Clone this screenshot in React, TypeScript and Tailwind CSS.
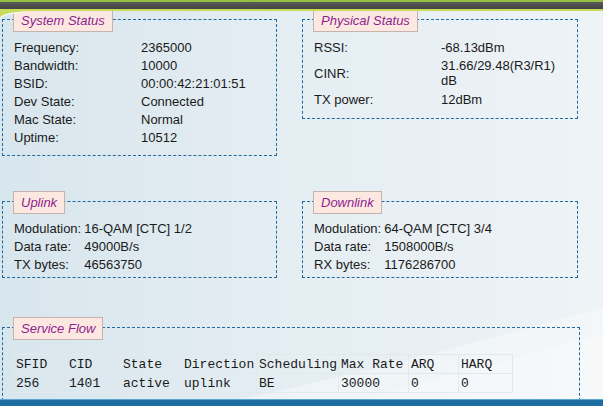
import React from "react";

type Row = [string, React.ReactNode, number?];

const sans = { fontFamily: '"Liberation Sans", Arial, sans-serif' };

function Legend({ title }: { title: string }) {
  return (
    <div className="relative z-10 ml-[11px] self-start h-[23px] px-[7px] flex items-center border border-[#c7b3ad] bg-[#fde8e1] text-[13px] italic text-[#8d1f8f] leading-none">
      {title}
    </div>
  );
}

function Panel({
  title,
  className,
  children,
}: {
  title: string;
  className?: string;
  children: React.ReactNode;
}) {
  return (
    <div className="flex flex-col">
      <Legend title={title} />
      <div className={"-mt-[13px] border border-dashed border-[#1f6aa3] " + (className ?? "")}>
        {children}
      </div>
    </div>
  );
}

function InfoTable({ rows, valueX }: { rows: Row[]; valueX: number }) {
  return (
    <table className="border-collapse text-[13px] text-[#1a1a1a]">
      <tbody>
        {rows.map(([k, v, h]) => (
          <tr key={k} style={{ height: h ?? 18 }}>
            <td
              className="p-0 leading-[15px] align-middle whitespace-nowrap"
              style={{ width: valueX }}
            >
              {k}
            </td>
            <td className="p-0 leading-[15px] align-middle w-[122px]">{v}</td>
          </tr>
        ))}
      </tbody>
    </table>
  );
}

function LinkTable({ rows }: { rows: Row[] }) {
  return (
    <table className="border-collapse text-[13px] text-[#1a1a1a]">
      <tbody>
        {rows.map(([k, v]) => (
          <tr key={k} className="h-[18px]">
            <td className="p-0 pr-[3px] leading-[15px] whitespace-nowrap">{k}</td>
            <td className="p-0 leading-[15px] whitespace-nowrap">{v}</td>
          </tr>
        ))}
      </tbody>
    </table>
  );
}

const flowCols = [
  { h: "SFID", v: "256", w: 53 },
  { h: "CID", v: "1401", w: 54 },
  { h: "State", v: "active", w: 61 },
  { h: "Direction", v: "uplink", w: 75 },
  { h: "Scheduling", v: "BE", w: 82 },
  { h: "Max Rate", v: "30000", w: 70 },
  { h: "ARQ", v: "0", w: 50 },
  { h: "HARQ", v: "0", w: 54 },
];

export default function App() {
  return (
    <div className="w-[603px] h-[406px] overflow-hidden flex flex-col bg-[#e4edf2]" style={sans}>
      {/* top banner strip */}
      <div className="h-[11px] shrink-0 flex flex-col">
        <div className="h-[2px] bg-[#95bd3e]" />
        <div className="h-[7px] bg-gradient-to-b from-[#5a5a58] to-[#434341]" />
        <div className="h-[2px] bg-[#c9dc5a]" />
      </div>

      <main className="relative flex-1 overflow-hidden bg-gradient-to-r from-[#d8e6ed] via-[#e5eef3] to-[#eef3f6]">
        {/* rounded corner under the banner */}
        <svg className="absolute left-0 top-0 z-20" width="22" height="9" viewBox="0 0 22 9">
          <path d="M0 0 H22 V0.8 Q6 1 0 6 Z" fill="#c9dc5a" />
          <path d="M22 1.3 Q6.5 1.5 0 7" stroke="#f4f8ee" strokeWidth="1.2" fill="none" />
        </svg>
        {/* soft light sweep in the lower right */}
        <svg className="absolute right-0 bottom-0" width="360" height="110" viewBox="0 0 360 110">
          <path d="M0 110 Q180 70 360 18 V110 Z" fill="#ffffff" opacity="0.35" />
          <path d="M120 110 Q250 75 360 45 V110 Z" fill="#ffffff" opacity="0.25" />
        </svg>

        <div className="relative pl-[2px] -mt-[2px] flex flex-col">
          <div className="grid grid-cols-[275px_276px] gap-x-[25px] items-start">
            <Panel title="System Status" className="pl-[11px] pt-[18px] pb-[9px]">
              <InfoTable
                valueX={127}
                rows={[
                  ["Frequency:", "2365000"],
                  ["Bandwidth:", "10000"],
                  ["BSID:", "00:00:42:21:01:51"],
                  ["Dev State:", "Connected"],
                  ["Mac State:", "Normal"],
                  ["Uptime:", "10512"],
                ]}
              />
            </Panel>
            <Panel title="Physical Status" className="pl-[11px] pt-[18px] pb-[10px]">
              <InfoTable
                valueX={127}
                rows={[
                  ["RSSI:", "-68.13dBm"],
                  ["CINR:", "31.66/29.48(R3/R1) dB", 34],
                  ["TX power:", "12dBm"],
                ]}
              />
            </Panel>
          </div>

          <div className="mt-[35px] grid grid-cols-[275px_276px] gap-x-[25px] items-start">
            <Panel title="Uplink" className="pl-[11px] pt-[17px] pb-[4px]">
              <LinkTable
                rows={[
                  ["Modulation:", "16-QAM [CTC] 1/2"],
                  ["Data rate:", "49000B/s"],
                  ["TX bytes:", "46563750"],
                ]}
              />
            </Panel>
            <Panel title="Downlink" className="pl-[11px] pt-[17px] pb-[4px]">
              <LinkTable
                rows={[
                  ["Modulation:", "64-QAM [CTC] 3/4"],
                  ["Data rate:", "1508000B/s"],
                  ["RX bytes:", "1176286700"],
                ]}
              />
            </Panel>
          </div>

          <div className="mt-[39px] w-[578px]">
            <Panel title="Service Flow" className="pl-[10px] pt-[26px] pb-[12px]">
              <table
                className="border-collapse text-[13px] text-[#1a1a1a] border-r border-r-[#9aa0a3]"
                style={{ fontFamily: '"Liberation Mono", "Courier New", monospace' }}
              >
                <tbody>
                  <tr>
                    {flowCols.map((c) => (
                      <td
                        key={c.h}
                        className="h-[19px] pl-[2px] pr-0 py-0 leading-[15px] whitespace-nowrap border border-[#e2e9ed]"
                        style={{ width: c.w }}
                      >
                        {c.h}
                      </td>
                    ))}
                  </tr>
                  <tr>
                    {flowCols.map((c) => (
                      <td
                        key={c.h}
                        className="h-[19px] pl-[2px] pr-0 py-0 leading-[15px] whitespace-nowrap border border-[#e2e9ed]"
                      >
                        {c.v}
                      </td>
                    ))}
                  </tr>
                </tbody>
              </table>
            </Panel>
          </div>
        </div>
      </main>

      {/* bottom band */}
      <div className="h-[7px] shrink-0 flex flex-col">
        <div className="h-[1px] bg-[#5aa6d4]" />
        <div className="flex-1 bg-[#1d6da3]" />
      </div>
    </div>
  );
}
